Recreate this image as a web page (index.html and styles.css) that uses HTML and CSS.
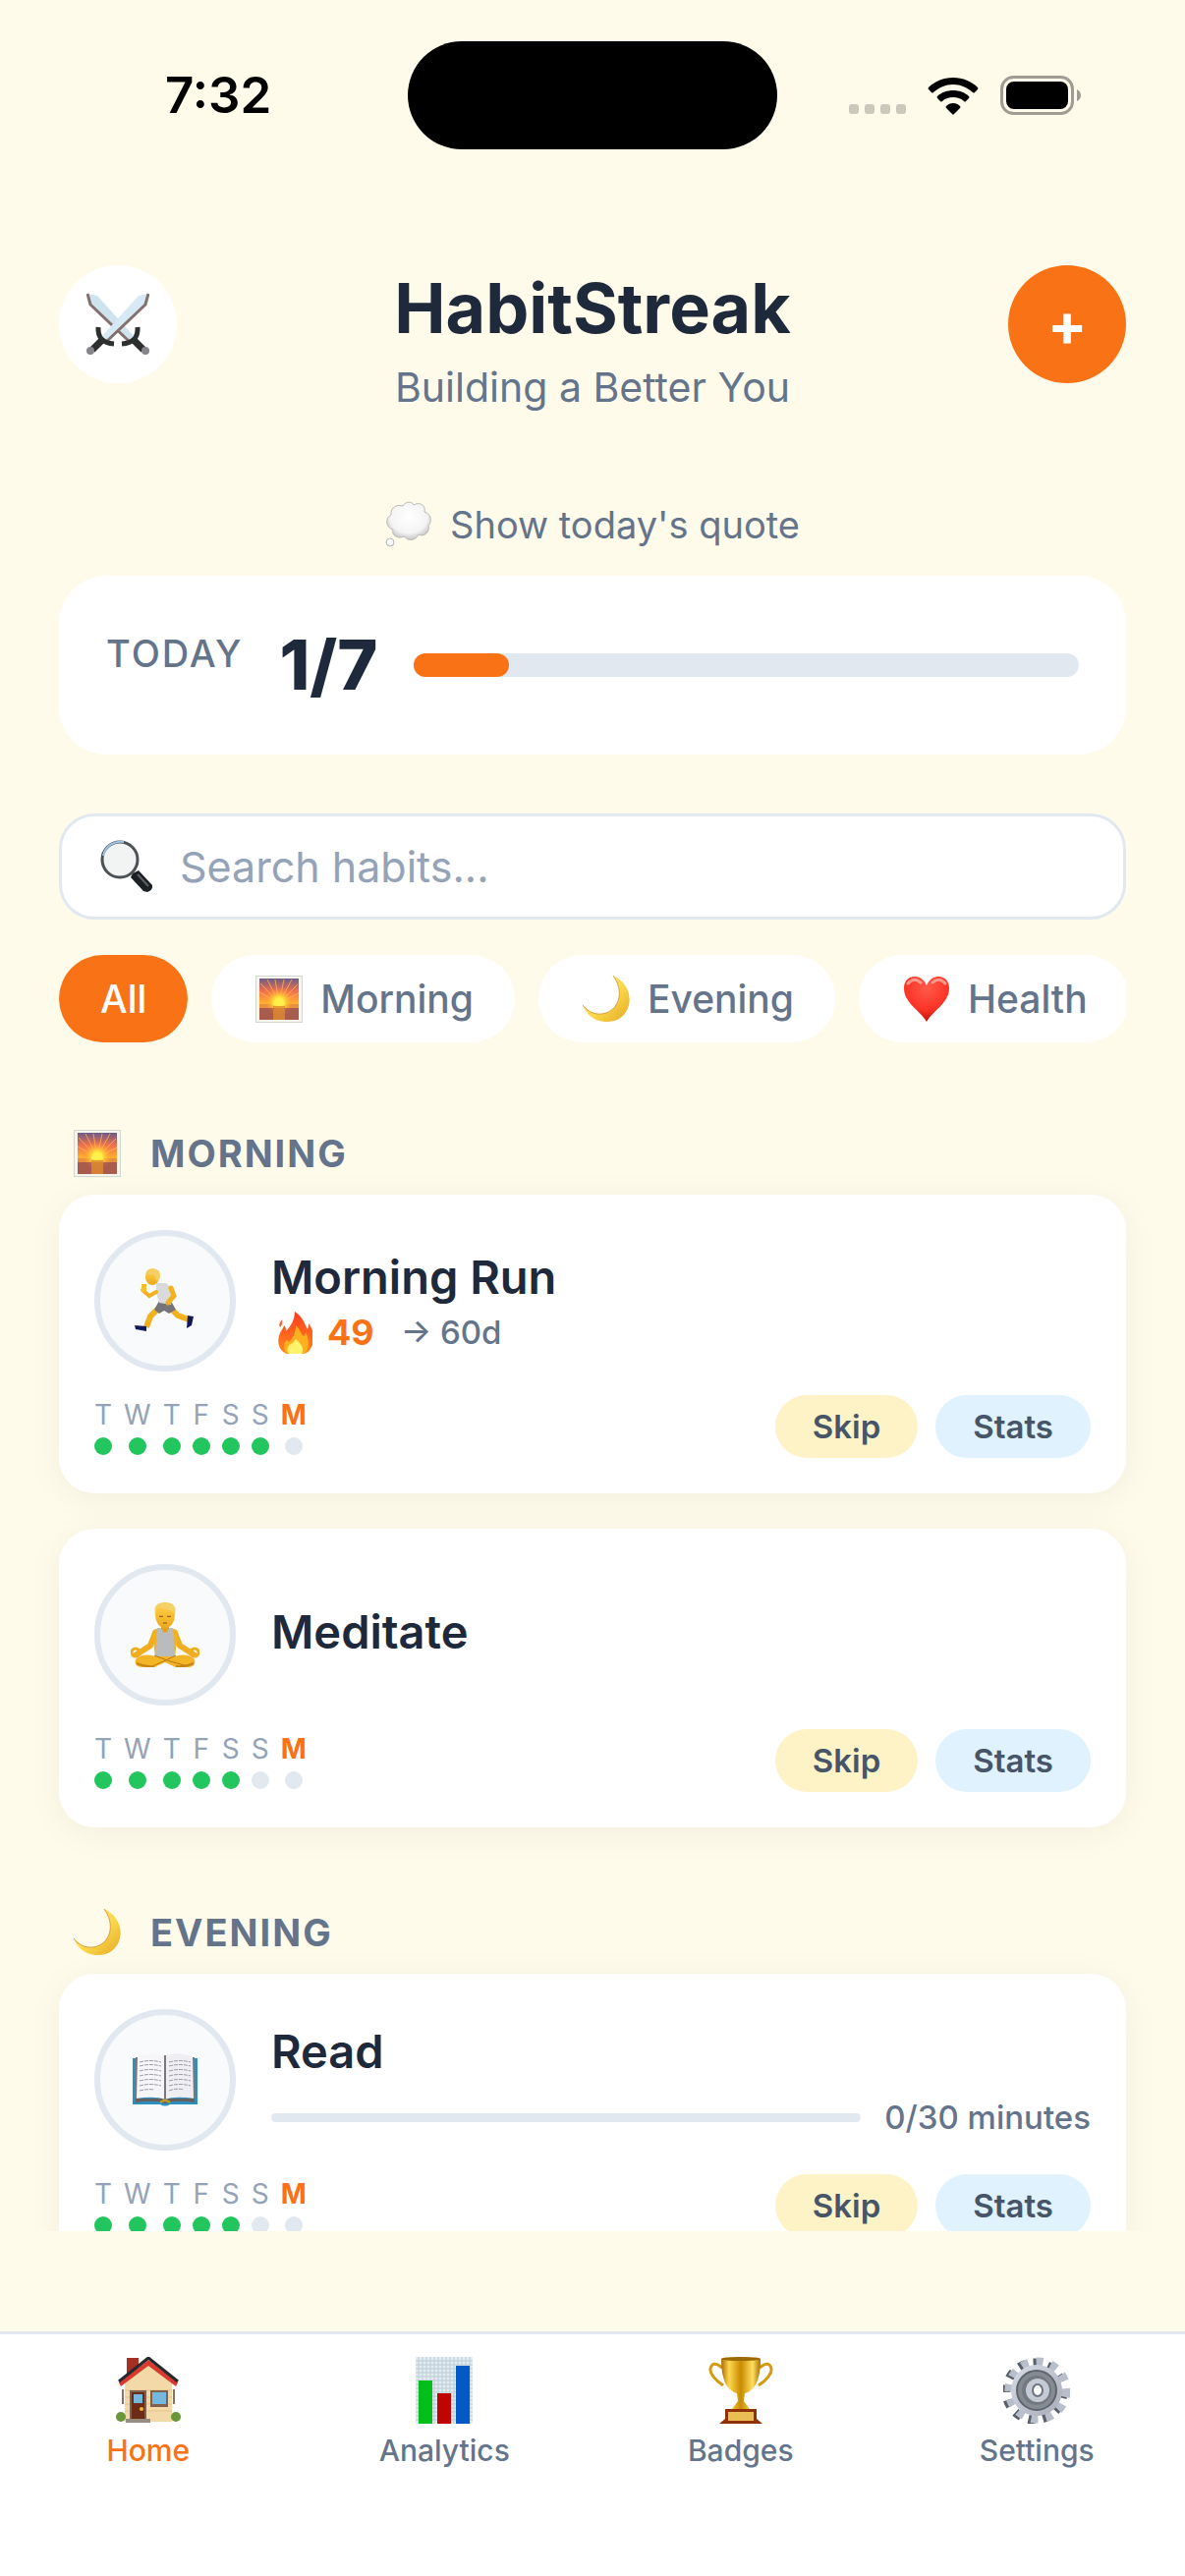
FILE: index.html
```
<!DOCTYPE html>
<html lang="en">
<head>
    <meta charset="UTF-8">
    <meta name="viewport" content="width=device-width, initial-scale=1.0">
    <title>HabitStreak</title>
    <link rel="stylesheet" href="styles.css">
</head>
<body>
    <!-- Shared icons -->
    <svg class="defs" aria-hidden="true">
        <defs>
            <linearGradient id="sky" x1="0" y1="0" x2="0" y2="1">
                <stop offset="0" stop-color="#6b5c88"/>
                <stop offset=".3" stop-color="#f0704c"/>
                <stop offset=".6" stop-color="#ffb02e"/>
            </linearGradient>
            <radialGradient id="sunGlow">
                <stop offset="0" stop-color="#fff79a"/>
                <stop offset=".35" stop-color="#ffe13a"/>
                <stop offset="1" stop-color="#ff8a3a" stop-opacity="0"/>
            </radialGradient>
            <linearGradient id="moonFill" x1="0" y1="0" x2="1" y2="1">
                <stop offset="0" stop-color="#ffe98a"/>
                <stop offset=".55" stop-color="#fbd84b"/>
                <stop offset="1" stop-color="#e3a823"/>
            </linearGradient>
            <radialGradient id="heartFill" cx=".5" cy=".25" r=".8">
                <stop offset="0" stop-color="#ff5a4a"/>
                <stop offset=".6" stop-color="#fb3427"/>
                <stop offset="1" stop-color="#b80d08"/>
            </radialGradient>
            <linearGradient id="fireFill" x1="0" y1="0" x2="0" y2="1">
                <stop offset="0" stop-color="#ff3b1f"/>
                <stop offset="1" stop-color="#ff8a1c"/>
            </linearGradient>
            <linearGradient id="gold" x1="0" x2="1">
                <stop offset="0" stop-color="#a86a00"/>
                <stop offset=".2" stop-color="#ffd84f"/>
                <stop offset=".5" stop-color="#c98a00"/>
                <stop offset=".8" stop-color="#ffdf5e"/>
                <stop offset="1" stop-color="#a86a00"/>
            </linearGradient>
            <radialGradient id="cloudFill" cx=".5" cy=".4" r=".6">
                <stop offset="0" stop-color="#ffffff"/>
                <stop offset=".7" stop-color="#f4f4f4"/>
                <stop offset="1" stop-color="#c4c4c4"/>
            </radialGradient>
            <linearGradient id="steel" x1="0" x2="1" y2="1">
                <stop offset="0" stop-color="#d5dde8"/>
                <stop offset="1" stop-color="#a9abb8"/>
            </linearGradient>
            <linearGradient id="skin" x1="0" y1="0" x2="0" y2="1">
                <stop offset="0" stop-color="#ffd44a"/>
                <stop offset="1" stop-color="#eda91c"/>
            </linearGradient>

            <symbol id="sunrise" viewBox="0 0 48 48">
                <rect x=".5" y=".5" width="47" height="47" fill="#f5f6ee" stroke="#d3d8cf"/>
                <rect x="4" y="3" width="40" height="42" fill="url(#sky)"/>
                <g stroke="#ffb45a" stroke-width="1" opacity=".8">
                    <path d="M24 28L5 8M24 28L12 4M24 28L20 4M24 28L29 4M24 28L37 4M24 28L43 9M24 28L4 17M24 28L44 18"/>
                </g>
                <rect x="4" y="29" width="40" height="16" fill="#b2604a"/>
                <rect x="4" y="29" width="40" height="4" fill="#e8913c"/>
                <circle cx="24" cy="27" r="15" fill="url(#sunGlow)"/>
                <rect x="4" y="33" width="40" height="12" fill="#a65a50" opacity=".75"/>
                <rect x="18" y="31" width="12" height="14" fill="#e08a2e" opacity=".8"/>
                <path d="M18 30a6 7 0 0 1 12 0z" fill="#fff04a"/>
            </symbol>
            <symbol id="moon" viewBox="0 0 48 48">
                <path d="M31 0C43 5 50 18 47 30C44 42 34 48 22 47C11 46 3 39 0 30C6 38 15 41 24 38C38 33 42 15 31 0Z" fill="url(#moonFill)"/>
                <path d="M31 0C42 15 38 33 24 38C15 41 6 38 0 30" fill="none" stroke="#d9a03a" stroke-width="1"/>
            </symbol>
        </defs>
    </svg>

    <div class="status-bar">
        <span class="time">7:32</span>
        <div class="island"></div>
        <div class="status-icons">
            <svg width="58" height="12" viewBox="0 0 58 12" fill="#cbc9bc">
                <rect x="0" y="1" width="10" height="10" rx="3"/>
                <rect x="16" y="1" width="10" height="10" rx="3"/>
                <rect x="32" y="1" width="10" height="10" rx="3"/>
                <rect x="48" y="1" width="10" height="10" rx="3"/>
            </svg>
            <svg width="52" height="38" viewBox="0 0 52 38">
                <path d="M26 0C36 0 45 4 51 10Q52 11 51 12L48 15Q47 16 46 15C40 10 34 7 26 7S12 10 6 15Q5 16 4 15L1 12Q0 11 1 10C7 4 16 0 26 0Z"/>
                <path d="M26 13C32 13 38 15 42 19Q43 20 42 21L39 24Q38 25 37 24C34 21 30 20 26 20S18 21 15 24Q14 25 13 24L10 21Q9 20 10 19C14 15 20 13 26 13Z"/>
                <path d="M26 26C29 26 31 27 33 29Q34 30 33 31L27 37Q26 38 25 37L19 31Q18 30 19 29C21 27 23 26 26 26Z"/>
            </svg>
            <svg width="82" height="40" viewBox="0 0 82 40">
                <rect x="1.5" y="1.5" width="72" height="37" rx="12" fill="none" stroke="#9f9d93" stroke-width="3"/>
                <rect x="6" y="6" width="63" height="28" rx="8"/>
                <path d="M78 14Q82 16 82 20T78 26Z" fill="#9f9d93"/>
            </svg>
        </div>
    </div>

    <main>
        <header>
            <button type="button" class="round-btn" aria-label="Challenges">
                <svg width="64" height="64" viewBox="0 0 64 64">
                    <path d="M1 1L11 3L49 45L44 50L4 12Z" fill="#cfe3ef"/>
                    <path d="M1 1L4 12L44 50" fill="none" stroke="#84706f" stroke-width="3"/>
                    <path d="M63 1L53 3L15 45L20 50L60 12Z" fill="#d6e9f4"/>
                    <path d="M63 1L60 12L20 50" fill="none" stroke="#84706f" stroke-width="3"/>
                    <g fill="none" stroke="#2d302f">
                        <path d="M12 35Q11 51 28 52M52 35Q53 51 36 52" stroke-width="5"/>
                        <path d="M16 48L6 58M48 48L58 58" stroke-width="7"/>
                    </g>
                    <circle cx="4" cy="59" r="4" fill="#85858c"/>
                    <circle cx="60" cy="59" r="4" fill="#85858c"/>
                </svg>
            </button>
            <div class="title">
                <h1>HabitStreak</h1>
                <p>Building a Better You</p>
            </div>
            <button type="button" class="round-btn add">+</button>
        </header>

        <button type="button" class="quote">
            <svg width="48" height="48" viewBox="0 0 48 48">
                <g fill="url(#cloudFill)" stroke="#b9b9b9" stroke-width="1">
                    <path d="M6 14C5 6 13 3 18 5C21 0 27 0 29 4C35 0 42 5 40 11C47 13 48 21 44 25C46 32 39 37 34 34C31 41 22 41 20 36C13 39 6 35 8 29C0 27 0 17 6 14Z"/>
                    <ellipse cx="5" cy="42" rx="4" ry="4"/>
                </g>
            </svg>
            Show today's quote
        </button>

        <section class="today">
            <span class="today-label">TODAY</span>
            <strong>1/7</strong>
            <div class="bar"><div class="bar-fill" style="width: 14.3%"></div></div>
        </section>

        <label class="search">
            <svg width="54" height="54" viewBox="0 0 54 54">
                <path d="M33 34L39 31L53 46Q54 51 48 53L44 52L31 38Z" fill="#1d2022"/>
                <path d="M38 35L49 47" stroke="#5b6063" stroke-width="2"/>
                <circle cx="20" cy="20" r="18" fill="#f2f3f3" stroke="#4c5154" stroke-width="3"/>
                <path d="M3 16A18 18 0 0 1 24 2" fill="none" stroke="#9dc4e6" stroke-width="2"/>
            </svg>
            <input type="text" placeholder="Search habits..." aria-label="Search habits">
        </label>

        <div class="chips">
            <button type="button" class="chip active">All</button>
            <button type="button" class="chip"><svg width="48" height="48"><use href="#sunrise"/></svg>Morning</button>
            <button type="button" class="chip"><svg width="48" height="48"><use href="#moon"/></svg>Evening</button>
            <button type="button" class="chip">
                <svg width="48" height="48" viewBox="0 0 48 48">
                    <path d="M24 47C18 36 1 28 1 13C1 5 6 1 12 1C18 1 22 5 24 10C26 5 30 1 36 1C42 1 47 5 47 13C47 28 30 36 24 47Z" fill="url(#heartFill)"/>
                    <path d="M5 8Q11 1 18 7M30 7Q37 1 43 8" fill="none" stroke="#ff9a8c" stroke-width="3" stroke-linecap="round"/>
                </svg>Health</button>
        </div>

        <h2><svg width="48" height="48"><use href="#sunrise"/></svg>MORNING</h2>
        <div class="cards">
            <article class="card">
                <div class="card-top">
                    <button type="button" class="check" aria-label="Complete Morning Run">
                        <svg width="66" height="66" viewBox="0 0 66 66">
                            <path d="M29 38L18 49L14 60" fill="none" stroke="#f2b21f" stroke-width="6"/>
                            <path d="M37 39L46 48L57 52" fill="none" stroke="#f2b21f" stroke-width="6"/>
                            <path d="M2 58L14 59L14 64L3 62Z" fill="#10195a"/>
                            <path d="M56 48L62 49L60 58L55 61Z" fill="#10195a"/>
                            <path d="M27 33L40 35L44 42L37 46L32 43L27 46L22 42Z" fill="#737577"/>
                            <path d="M24 15L34 15L40 20L39 37L27 35L24 25Z" fill="#d9dadc"/>
                            <path d="M24 24L17 28L10 22" fill="none" stroke="#f2b21f" stroke-width="4" stroke-linecap="round"/>
                            <path d="M39 20L42 28L36 35" fill="none" stroke="#f2b21f" stroke-width="5" stroke-linecap="round"/>
                            <path d="M9 16H14V24H9Z" fill="#f7bf2e"/>
                            <ellipse cx="20" cy="9" rx="7" ry="8" fill="url(#skin)"/>
                            <path d="M13 6Q14 0 21 0Q29 1 28 9Q27 13 24 12L22 7Z" fill="#f4d064"/>
                        </svg>
                    </button>
                    <div class="info">
                        <h3>Morning Run</h3>
                        <div class="streak">
                            <svg width="42" height="43" viewBox="-3 0 42 43">
                                <path d="M21 0C30 6 31 13 34 18C35 15 35 13 35 12C41 20 42 29 38 36Q35 43 29 43H13C5 40 3 32 5 25C6 20 9 18 10 14C12 16 12 18 12 20C17 15 21 8 21 0Z" fill="url(#fireFill)"/>
                                <path d="M8 8Q4 13 6 16Q9 13 8 8Z" fill="#ff5a28"/>
                                <path d="M22 14C27 19 27 23 30 25Q32 24 32 21C37 30 35 43 28 43H14C8 38 10 31 13 29L15 31C19 27 22 22 22 14Z" fill="#ffb01f"/>
                                <path d="M22 28C28 33 31 38 28 43H15C12 39 14 35 17 33Q20 32 22 28Z" fill="#fff36b"/>
                            </svg>
                            <b>49</b>
                            <span class="goal">→ 60d</span>
                        </div>
                    </div>
                </div>
                <div class="card-bottom">
                    <ul class="week">
                        <li class="done">T</li><li class="done">W</li><li class="done">T</li><li class="done">F</li><li class="done">S</li><li class="done">S</li><li class="now">M</li>
                    </ul>
                    <button type="button" class="pill skip">Skip</button>
                    <button type="button" class="pill stats">Stats</button>
                </div>
            </article>

            <article class="card">
                <div class="card-top">
                    <button type="button" class="check" aria-label="Complete Meditate">
                        <svg width="70" height="66" viewBox="0 0 70 66">
                            <path d="M25 31L20 44L6 53M45 31L50 44L64 53" fill="none" stroke="#f0ad1f" stroke-width="6" stroke-linecap="round" stroke-linejoin="round"/>
                            <circle cx="5" cy="51" r="4" fill="none" stroke="#f0ad1f" stroke-width="3"/>
                            <circle cx="65" cy="51" r="4" fill="none" stroke="#f0ad1f" stroke-width="3"/>
                            <path d="M31 23H39V32H31Z" fill="#e0a01c"/>
                            <path d="M22 30Q24 26 31 27Q35 34 39 27Q46 26 48 30L45 56H25Z" fill="#f2b21f"/>
                            <path d="M27 26L31 26Q35 36 39 26L43 26L45 56H25Z" fill="#babbbd"/>
                            <path d="M25 55Q12 51 5 58Q3 66 13 66H24L35 61L46 66H57Q67 66 65 58Q58 51 45 55Z" fill="#f3b526"/>
                            <path d="M24 54Q38 60 58 65M46 54Q34 60 22 65" fill="none" stroke="#b9770c" stroke-width="1"/>
                            <path d="M6 62Q14 66 24 65M64 62Q56 66 46 65" fill="none" stroke="#c88413" stroke-width="2"/>
                            <ellipse cx="35" cy="13" rx="10" ry="13" fill="url(#skin)"/>
                            <path d="M25 13Q22 0 35 0Q48 0 45 13Q43 8 36 7Q31 6 29 4Q26 7 25 13Z" fill="#f5d165"/>
                            <path d="M29 14q2 1 4 0M37 14q2 1 4 0M33 21h4" stroke="#8a4a1c" stroke-width="1" fill="none"/>
                        </svg>
                    </button>
                    <div class="info">
                        <h3>Meditate</h3>
                    </div>
                </div>
                <div class="card-bottom">
                    <ul class="week">
                        <li class="done">T</li><li class="done">W</li><li class="done">T</li><li class="done">F</li><li class="done">S</li><li>S</li><li class="now">M</li>
                    </ul>
                    <button type="button" class="pill skip">Skip</button>
                    <button type="button" class="pill stats">Stats</button>
                </div>
            </article>
        </div>

        <h2><svg width="48" height="48"><use href="#moon"/></svg>EVENING</h2>
        <div class="cards">
            <article class="card">
                <div class="card-top">
                    <button type="button" class="check" aria-label="Complete Read">
                        <svg width="68" height="54" viewBox="0 0 68 54">
                            <path d="M1 5H67V52H39Q34 55 29 52H1Z" fill="#2d8fc0"/>
                            <path d="M4 46H64V50Q45 47 34 51Q23 47 4 50Z" fill="#67615e"/>
                            <path d="M5 4Q24 -3 34 3V47Q24 43 4 46Z" fill="#f6f5f8"/>
                            <path d="M63 4Q44 -3 34 3V47Q44 43 64 46Z" fill="#efeef3"/>
                            <path d="M5 4L4 46M63 4L64 46M34 2V48" stroke="#7c787a" stroke-width="2"/>
                            <path d="M8 9q11-3 22 0M8 13q11-3 22 0M8 18q11-3 22 0M8 23q11-3 22 0M8 28q11-3 22 0M8 33q11-3 22 0M8 38q8-2 15-1M38 9q11-3 22 0M38 13q11-3 22 0M38 18q11-3 22 0M38 23q11-3 22 0M38 28q11-3 22 0M38 33q11-3 22 0M38 38q8-3 15-1" fill="none" stroke="#9c9aa2" stroke-width="1" stroke-dasharray="4 1"/>
                            <path d="M29 50q5-4 10 0" fill="none" stroke="#c9a21c" stroke-width="2"/>
                        </svg>
                    </button>
                    <div class="info">
                        <h3>Read</h3>
                        <div class="progress">
                            <div class="track"></div>
                            <span>0/30 minutes</span>
                        </div>
                    </div>
                </div>
                <div class="card-bottom">
                    <ul class="week">
                        <li class="done">T</li><li class="done">W</li><li class="done">T</li><li class="done">F</li><li class="done">S</li><li>S</li><li class="now">M</li>
                    </ul>
                    <button type="button" class="pill skip">Skip</button>
                    <button type="button" class="pill stats">Stats</button>
                </div>
            </article>
        </div>
    </main>

    <nav>
        <a href="#" class="current">
            <svg width="68" height="68" viewBox="0 0 68 68">
                <rect x="12" y="1" width="12" height="22" fill="#a52f25"/>
                <path d="M10 66V27L34 5L58 27V66Z" fill="#f3d9a8"/>
                <path d="M10 34H58M10 41H58M10 48H58M10 55H58" stroke="#e3c48f" stroke-width="1"/>
                <path d="M4 26L34 3L64 26L62 30L34 9L6 30Z" fill="#d93a30"/>
                <path d="M4 25L34 1L64 25" fill="none" stroke="#26292c" stroke-width="3"/>
                <rect x="15" y="34" width="17" height="32" fill="#7a6152"/>
                <rect x="17" y="36" width="13" height="27" fill="#6c2b17"/>
                <rect x="19" y="38" width="9" height="9" fill="#74b8e0"/>
                <circle cx="27" cy="53" r="2" fill="#f0b53a"/>
                <rect x="36" y="34" width="18" height="17" fill="#80624a"/>
                <rect x="38" y="36" width="14" height="12" fill="#74b8e0"/>
                <path d="M8 33V48M60 33V48" stroke="#8a7460" stroke-width="2"/>
                <circle cx="6" cy="61" r="5" fill="#6a973a"/>
                <circle cx="62" cy="61" r="5" fill="#6a973a"/>
                <rect x="11" y="63" width="25" height="4" fill="#978c82"/>
            </svg>
            Home
        </a>
        <a href="#">
            <svg width="68" height="68" viewBox="0 0 68 68">
                <rect x="5" y="0" width="58" height="68" fill="#e4edf2"/>
                <path d="M5 4H63M5 8H63M5 12H63M5 16H63M5 20H63M5 24H63M5 28H63M5 32H63M5 36H63M5 40H63M5 44H63M5 48H63M5 52H63M5 56H63M5 60H63M5 64H63M8 0V68M12 0V68M16 0V68M20 0V68M24 0V68M28 0V68M32 0V68M36 0V68M40 0V68M44 0V68M48 0V68M52 0V68M56 0V68M60 0V68" stroke="#b9cbd6" stroke-width="1"/>
                <rect x="8" y="24" width="14" height="44" fill="#04bf1a"/>
                <rect x="27" y="37" width="14" height="31" fill="#bf0404"/>
                <rect x="46" y="9" width="14" height="59" fill="#0459c4"/>
            </svg>
            Analytics
        </a>
        <a href="#">
            <svg width="68" height="68" viewBox="0 0 68 68">
                <path d="M15 11Q5 3 3 12Q2 19 16 29M53 11Q63 3 65 12Q66 19 52 29" fill="none" stroke="#d69a12" stroke-width="3"/>
                <path d="M14 2Q34 -2 54 2Q54 33 38 37L37 45L43 53H25L31 45L30 37Q14 33 14 2Z" fill="url(#gold)"/>
                <ellipse cx="34" cy="2" rx="20" ry="2" fill="#9b6a06"/>
                <path d="M18 53H50V63L56 68H12L18 63Z" fill="#8f3208"/>
                <rect x="21" y="56" width="26" height="9" fill="#e9bf55"/>
            </svg>
            Badges
        </a>
        <a href="#">
            <svg width="68" height="68" viewBox="0 0 68 68">
                <g fill="none" stroke-dasharray="7 8" stroke-width="9">
                    <circle cx="32" cy="35" r="29" stroke="#59606a"/>
                    <circle cx="35" cy="34" r="29" stroke="#b9bfca"/>
                </g>
                <circle cx="34" cy="34" r="26" fill="url(#steel)"/>
                <circle cx="34" cy="34" r="20" fill="#858b93" stroke="#5f656d" stroke-width="2"/>
                <circle cx="34" cy="34" r="15" fill="#737981"/>
                <circle cx="35" cy="34" r="12" fill="#c5cbd4"/>
                <ellipse cx="35" cy="34" rx="5" ry="6" fill="#fff" stroke="#6d7680" stroke-width="2"/>
            </svg>
            Settings
        </a>
    </nav>
</body>
</html>
```
FILE: styles.css
```
* { box-sizing: border-box; }
body { font-family: Inter, "Liberation Sans", sans-serif; background-color: #fffbeb; color: #1e293b; margin: 0; height: 100vh; display: flex; flex-direction: column; }
button { font-family: inherit; border: none; padding: 0; cursor: pointer; }
svg { display: block; flex-shrink: 0; }
h1, h2, h3, p, ul { margin: 0; padding: 0; }
.defs { position: absolute; width: 0; height: 0; }

/* Status bar */
.status-bar { display: grid; grid-template-columns: 1fr 376px 1fr; align-items: center; padding-top: 42px; color: #000; }
.time { font-size: 51px; line-height: 60px; font-weight: 600; padding-left: 168px; }
.island { height: 110px; background-color: #000; border-radius: 55px; }
.status-icons { display: flex; align-items: flex-end; justify-content: flex-end; gap: 22px; padding-right: 106px; }

main { flex: 1; min-height: 0; overflow: hidden; padding: 118px 60px 0; margin-bottom: 102px; }

/* Header */
header { display: flex; justify-content: space-between; align-items: flex-start; }
.round-btn { display: flex; align-items: center; justify-content: center; width: 120px; height: 120px; border-radius: 60px; background-color: #fff; }
.add { background-color: #f97316; color: #fff; font-size: 60px; font-weight: 700; }
.title { text-align: center; }
h1 { font-size: 70px; line-height: 88px; font-weight: 700; }
.title p { font-size: 41px; line-height: 52px; margin-top: 10px; color: #64748b; }

.quote { display: flex; align-items: center; gap: 18px; margin: 84px auto 0; padding: 6px 0 18px; background: none; color: #64748b; font-size: 38px; line-height: 48px; }

/* Today progress */
.today { display: flex; align-items: center; gap: 37px; margin-top: 10px; padding: 48px; border-radius: 48px; background-color: #fff; }
.today-label { font-size: 38px; line-height: 48px; font-weight: 500; letter-spacing: 2px; margin-bottom: 24px; color: #64748b; }
.today strong { font-size: 70px; line-height: 86px; font-weight: 800; }
.bar { flex: 1; height: 24px; border-radius: 12px; background-color: #e2e8f0; }
.bar-fill { height: 100%; border-radius: 12px; background-color: #f97316; }

.search { display: flex; align-items: center; gap: 27px; height: 108px; margin-top: 60px; padding: 0 39px; background-color: #fff; border: 3px solid #e2e8f0; border-radius: 36px; }
.search input { flex: 1; border: none; outline: none; background: none; padding: 0; font-family: inherit; font-size: 43px; color: #1e293b; }
.search input::placeholder { color: #94a3b8; }

.chips { display: flex; gap: 24px; margin-top: 36px; overflow: hidden; }
.chip { display: flex; align-items: center; gap: 15px; flex-shrink: 0; height: 89px; padding: 0 42px; border-radius: 45px; background-color: #fff; color: #64748b; font-size: 39px; font-weight: 500; }
.chip svg { margin: 0 3px; }
.chip.active { background-color: #f97316; color: #fff; }

/* Habit cards */
h2 { display: flex; align-items: center; gap: 30px; margin-top: 83px; padding: 6px 15px 18px; font-size: 38px; line-height: 48px; font-weight: 700; letter-spacing: 2px; color: #64748b; }
.cards + h2 { margin-top: 77px; }
.cards { display: flex; flex-direction: column; gap: 36px; }
.card { padding: 36px; border-radius: 36px; background-color: #fff; box-shadow: 0 6px 36px rgba(0, 0, 0, 0.05); }
.card-top { display: flex; align-items: center; gap: 36px; }
.check { display: flex; align-items: center; justify-content: center; width: 144px; height: 144px; border: 6px solid #e2e8f0; border-radius: 72px; background-color: #f8fafc; }
.info { flex: 1; }
h3 { font-size: 47px; line-height: 58px; font-weight: 600; margin-bottom: 6px; }
.streak { display: flex; align-items: center; gap: 15px; height: 42px; }
.streak b { font-size: 36px; color: #f97316; }
.goal { font-size: 33px; font-weight: 500; color: #64748b; margin-left: 12px; }
.progress { display: flex; align-items: center; gap: 24px; margin-top: 18px; font-size: 33px; line-height: 40px; font-weight: 500; color: #64748b; }
.track { flex: 1; height: 9px; border-radius: 5px; background-color: #e2e8f0; }

.card-bottom { display: flex; align-items: center; gap: 18px; margin-top: 24px; }
.week { display: flex; gap: 12px; flex: 1; list-style: none; }
.week li { display: flex; flex-direction: column; align-items: center; gap: 6px; font-size: 28px; line-height: 33px; color: #94a3b8; }
.week li::after { content: ""; width: 18px; height: 18px; border-radius: 9px; background-color: #e2e8f0; }
.week .done::after { background-color: #22c55e; }
.week .now { color: #f97316; font-weight: 700; }
.pill { height: 64px; padding: 0 38px; border-radius: 32px; font-size: 33px; font-weight: 600; color: #475569; }
.skip { background-color: #fef3c7; }
.stats { background-color: #e0f2fe; }

/* Tab bar */
nav { display: grid; grid-template-columns: repeat(4, 1fr); border-top: 3px solid #e2e8f0; background-color: #fff; padding: 23px 0 110px; }
nav a { display: flex; flex-direction: column; align-items: center; gap: 9px; font-size: 30px; line-height: 36px; font-weight: 500; color: #64748b; text-decoration: none; }
nav .current { color: #f97316; }
```
